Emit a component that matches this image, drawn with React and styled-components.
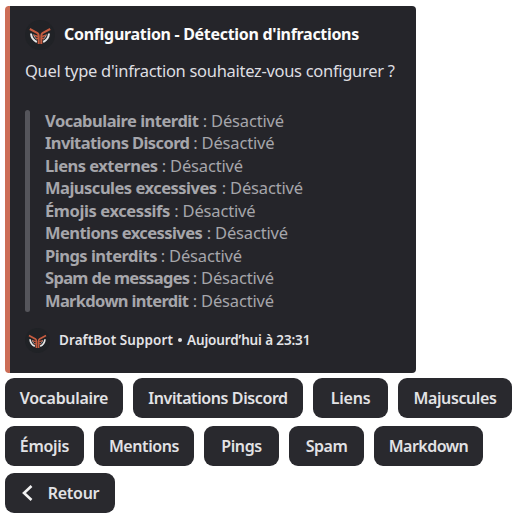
import React from "react";
import styled, { createGlobalStyle } from "styled-components";

const GlobalStyle = createGlobalStyle`
  * { box-sizing: border-box; }
  body { margin: 0; background: #fff; font-family: "Noto Sans", sans-serif; }
`;

const Page = styled.main`
  width: 519px;
  height: 520px;
  padding: 6px 0 0 5px;
  overflow: hidden;
`;

const Embed = styled.article`
  width: 411px;
  height: 367px;
  padding: 14px 15px 0;
  background: #25252a;
  border-left: 5px solid #cc6d56;
  border-radius: 4px;
`;

const Header = styled.header`
  display: flex;
  align-items: center;
  height: 30px;
  gap: 10px;
`;

const Avatar = styled.span`
  display: block;
  flex: none;
  width: ${(p) => p.$size}px;
  height: ${(p) => p.$size}px;
  border-radius: 50%;
  background: #202226;
  svg { display: block; width: 100%; height: 100%; }
`;

const Text = styled.span`
  white-space: pre;
  letter-spacing: ${(p) => p.$track || 0}px;
`;

const Title = styled(Text).attrs({ as: "h1" })`
  margin: 0 0 2px -1px;
  font-size: 16px;
  line-height: 22px;
  font-weight: 700;
  color: #fbfbfb;
`;

const Question = styled(Text).attrs({ as: "p" })`
  margin: 10px 0 0;
  font-size: 16.5px;
  line-height: 22px;
  color: #dedee1;
`;

const Quote = styled.blockquote`
  display: flex;
  gap: 15px;
  margin: 28px 0 0;
  height: 202px;
`;

const QuoteBar = styled.span`
  width: 5px;
  border-radius: 3px;
  background: #55555b;
`;

const List = styled.ul`
  margin: -0.2px 0 0;
  padding: 0;
  list-style: none;
`;

const Item = styled.li`
  display: flex;
  height: 22.5px;
  font-size: 16.5px;
  line-height: 22px;
  color: #a6a6ab;
`;

const Name = styled(Text)`
  font-weight: 700;
  width: ${(p) => p.$width}px;
`;

const Colon = styled.span`
  width: 12px;
  text-align: center;
`;

const Footer = styled.footer`
  display: flex;
  align-items: center;
  gap: 9px;
  height: 26px;
  margin-top: 15px;
  font-size: 13.5px;
  font-weight: 600;
  color: #e3e3e6;
`;

const Credits = styled.div`
  display: flex;
  align-items: center;
`;

const Dot = styled.span`
  width: 4px;
  height: 4px;
  margin: 0 5px;
  border-radius: 50%;
  background: #e3e3e6;
`;

const ButtonRow = styled.div`
  display: flex;
  gap: 10px;
  margin-top: ${(p) => p.$top}px;
`;

const Button = styled.button`
  display: flex;
  flex: none;
  align-items: center;
  justify-content: center;
  gap: 15px;
  width: ${(p) => p.$width}px;
  height: 40px;
  padding: 0;
  border: 0;
  border-radius: 9px;
  background: #29292e;
  color: #e2e2e5;
  font: 600 16px/22px "Noto Sans", sans-serif;
`;

const Chevron = styled.svg`
  display: block;
  width: 12px;
  height: 18px;
`;

function Owl() {
  return (
    <svg viewBox="0 0 30 30" fill="none" aria-hidden="true">
      <path d="M6 13.5Q6.5 19.5 11.8 22M24 13.5Q23.5 19.5 18.2 22" stroke="#e8e8e8" strokeWidth="2" />
      <path d="M8.7 14.5Q9.2 17.8 11.5 19M21.3 14.5Q20.8 17.8 18.5 19" stroke="#d0d0d2" strokeWidth=".9" />
      <path d="M4.8 9L12.5 13.2Q13.7 14 13.7 16V24M25.2 9L17.5 13.2Q16.3 14 16.3 16V24" stroke="#c65c40" strokeWidth="2" />
      <path d="M9 15.2L13 16.5M21 15.2L17 16.5M11 18.6H13M19 18.6H17" stroke="#c65c40" strokeWidth="1.5" />
    </svg>
  );
}

const infractions = [
  { name: "Vocabulaire interdit", width: 154, track: -0.5 },
  { name: "Invitations Discord", width: 144.5, track: -0.6 },
  { name: "Liens externes", width: 113, track: -0.5 },
  { name: "Majuscules excessives", width: 173, track: -0.5 },
  { name: "Émojis excessifs", width: 125.5, track: -0.4 },
  { name: "Mentions excessives", width: 158, track: -0.57 },
  { name: "Pings interdits", width: 112, track: -0.5 },
  { name: "Spam de messages", width: 144, track: -0.68 },
  { name: "Markdown interdit", width: 144, track: -0.68 },
];

const buttonRows = [
  {
    top: 5,
    buttons: [
      { label: "Vocabulaire", width: 118, track: -0.3 },
      { label: "Invitations Discord", width: 170, track: -0.4 },
      { label: "Liens", width: 75, track: -0.2 },
      { label: "Majuscules", width: 114, track: -0.4 },
    ],
  },
  {
    top: 8,
    buttons: [
      { label: "Émojis", width: 79, track: -0.3 },
      { label: "Mentions", width: 100, track: -0.4 },
      { label: "Pings", width: 75, track: -0.4 },
      { label: "Spam", width: 75, track: -0.5 },
      { label: "Markdown", width: 109, track: -0.5 },
    ],
  },
  { top: 7, buttons: [{ label: "Retour", width: 110, track: -0.3, back: true }] },
];

export default function App() {
  return (
    <Page>
      <GlobalStyle />
      <Embed>
        <Header>
          <Avatar $size={30}><Owl /></Avatar>
          <Title $track={-0.31}>Configuration - Détection d'infractions</Title>
        </Header>
        <Question $track={-0.3}>Quel type d'infraction souhaitez-vous configurer ?</Question>
        <Quote>
          <QuoteBar />
          <List>
            {infractions.map((item) => (
              <Item key={item.name}>
                <Name $width={item.width} $track={item.track}>{item.name}</Name>
                <Colon>:</Colon>
                <Text $track={-0.15}>Désactivé</Text>
              </Item>
            ))}
          </List>
        </Quote>
        <Footer>
          <Avatar $size={25}><Owl /></Avatar>
          <Credits>
            <Text $track={0.08}>DraftBot Support</Text>
            <Dot />
            <Text $track={-0.13}>Aujourd’hui à 23:31</Text>
          </Credits>
        </Footer>
      </Embed>
      {buttonRows.map((row) => (
        <ButtonRow key={row.top} $top={row.top}>
          {row.buttons.map((b) => (
            <Button key={b.label} $width={b.width}>
              {b.back && (
                <Chevron viewBox="0 0 12 18" fill="none" stroke="#f2f2f3" strokeWidth="2.6">
                  <path d="M10.5 2L3 9L10.5 16" />
                </Chevron>
              )}
              <Text $track={b.track}>{b.label}</Text>
            </Button>
          ))}
        </ButtonRow>
      ))}
    </Page>
  );
}
